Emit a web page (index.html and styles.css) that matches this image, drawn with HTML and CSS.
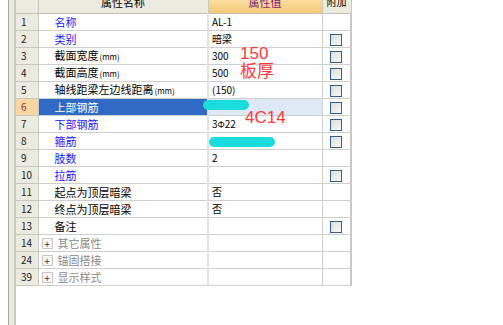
FILE: index.html
```html
<!DOCTYPE html>
<html lang="zh-CN">
<head>
    <meta charset="UTF-8">
    <title>属性编辑</title>
    <link rel="stylesheet" href="styles.css">
</head>
<body>
    <div class="page">
        <div class="gutter"></div>
        <div class="strip"></div>
        <div class="grid-wrap">
            <table class="props">
                <colgroup>
                    <col class="c-num">
                    <col class="c-name">
                    <col class="c-val">
                    <col class="c-add">
                </colgroup>
                <thead>
                    <tr>
                        <th class="h-num"></th>
                        <th class="h-name">属性名称</th>
                        <th class="h-val">属性值</th>
                        <th class="h-add">附加</th>
                    </tr>
                </thead>
                <tbody>
                    <tr><td class="num">1</td><td class="name blue">名称</td><td class="val">AL-1</td><td class="add"></td></tr>
                    <tr><td class="num">2</td><td class="name blue">类别</td><td class="val">暗梁</td><td class="add"><span class="chk"></span></td></tr>
                    <tr><td class="num">3</td><td class="name">截面宽度<small>(mm)</small></td><td class="val">300<span class="note n150">150</span></td><td class="add"><span class="chk"></span></td></tr>
                    <tr><td class="num">4</td><td class="name">截面高度<small>(mm)</small></td><td class="val">500<span class="note nthick">板厚</span></td><td class="add"><span class="chk"></span></td></tr>
                    <tr><td class="num">5</td><td class="name">轴线距梁左边线距离<small>(mm)</small></td><td class="val">(150)</td><td class="add"><span class="chk"></span></td></tr>
                    <tr class="sel"><td class="num">6</td><td class="name">上部钢筋</td><td class="val"><span class="blot b6"></span></td><td class="add"><span class="chk"></span></td></tr>
                    <tr><td class="num">7</td><td class="name blue">下部钢筋</td><td class="val">3<span class="bar">Φ</span>22<span class="note n4c">4C14</span></td><td class="add"><span class="chk"></span></td></tr>
                    <tr><td class="num">8</td><td class="name blue">箍筋</td><td class="val"><span class="blot b8"></span></td><td class="add"><span class="chk"></span></td></tr>
                    <tr><td class="num">9</td><td class="name blue">肢数</td><td class="val">2</td><td class="add"></td></tr>
                    <tr><td class="num">10</td><td class="name blue">拉筋</td><td class="val"></td><td class="add"><span class="chk"></span></td></tr>
                    <tr><td class="num">11</td><td class="name">起点为顶层暗梁</td><td class="val">否</td><td class="add"></td></tr>
                    <tr><td class="num">12</td><td class="name">终点为顶层暗梁</td><td class="val">否</td><td class="add"></td></tr>
                    <tr><td class="num">13</td><td class="name">备注</td><td class="val"></td><td class="add"><span class="chk"></span></td></tr>
                    <tr class="group"><td class="num">14</td><td class="name"><span class="plus">+</span>其它属性</td><td class="val"></td><td class="add"></td></tr>
                    <tr class="group"><td class="num">24</td><td class="name"><span class="plus">+</span>锚固搭接</td><td class="val"></td><td class="add"></td></tr>
                    <tr class="group"><td class="num">39</td><td class="name"><span class="plus">+</span>显示样式</td><td class="val"></td><td class="add"></td></tr>
                </tbody>
            </table>
        </div>
    </div>
</body>
</html>
```

FILE: styles.css
```css
body {
    margin: 0;
    background-color: #fff;
    font-family: "Noto Sans CJK SC", "Liberation Sans", sans-serif;
    font-size: 11px;
    color: #000;
}

.page {
    display: flex;
    height: 325px;
    overflow: hidden;
}

.gutter {
    width: 8px;
}

.strip {
    width: 5px;
    border-left: 1px solid #a8a8a0;
    border-right: 2px solid #c8c8c0;
    background-color: #ecebe0;
}

.grid-wrap {
    overflow: hidden;
}

.props {
    border-collapse: collapse;
    table-layout: fixed;
    width: 335px;
    margin-top: -5px;
}

.c-num { width: 22px; }
.c-name { width: 170px; }
.c-val { width: 114px; }
.c-add { width: 29px; }

th {
    height: 18px;
    padding: 0;
    font-weight: normal;
    font-size: 11px;
    line-height: 14px;
    vertical-align: top;
    background-color: #ecebe0;
    border-right: 1px solid #c8c8c0;
    border-bottom: 1px solid #c0c0b8;
}

.h-val {
    background: linear-gradient(#fbe3ae, #f6c978);
    color: #7a1a7a;
}

.h-add {
    font-size: 10px;
}

td {
    height: 16px;
    padding: 0;
    line-height: 14px;
    border-bottom: 1px solid #cfcfcf;
    white-space: nowrap;
    overflow: visible;
    position: relative;
}

.num {
    background-color: #ecebe0;
    border-right: 1px solid #c8c8c0;
    border-bottom: 1px solid #c8c8c0;
    font-size: 10px;
    padding-left: 5px;
    color: #222;
}

.name {
    padding-left: 16px;
}

.name small {
    font-size: 8px;
    margin-left: 1px;
}

.blue {
    color: #1a1aff;
}

.val {
    border-left: 2px solid #e2e2e2;
    padding-left: 3px;
    font-size: 10px;
}

.add {
    border-left: 1px solid #cfcfcf;
    border-right: 2px solid #c8c8c8;
    text-align: center;
}

.chk {
    display: block;
    width: 10px;
    height: 10px;
    margin: 1px auto 0;
    border: 1px solid #2f5f8f;
    background: linear-gradient(135deg, #dcdcd8, #fafafa);
}

.sel .num {
    background-color: #f9d7a2;
    color: #9a2a2a;
}

.sel .name {
    background-color: #316ac5;
    color: #fff;
}

.sel .val {
    background-color: #dfe8f5;
}

.group .name {
    padding-left: 3px;
    color: #8a8a8a;
}

.plus {
    display: inline-block;
    width: 9px;
    height: 9px;
    line-height: 9px;
    margin: 2px 5px 0 0;
    vertical-align: top;
    border: 1px solid #c8c8c8;
    background-color: #f6f6f6;
    color: #333;
    font-size: 10px;
    text-align: center;
}

.bar {
    font-size: 9px;
}

.note {
    position: absolute;
    color: #ff3a3a;
    font-family: "Liberation Sans", "Noto Sans CJK SC", sans-serif;
    font-size: 17px;
    line-height: 18px;
}

.n150 {
    left: 31px;
    top: -3px;
}

.nthick {
    left: 31px;
    top: -2px;
}

.n4c {
    left: 36px;
    top: -7px;
}

.blot {
    position: absolute;
    height: 10px;
    border-radius: 6px;
    background-color: #1adcdc;
}

.b6 {
    left: -6px;
    top: 1px;
    width: 46px;
}

.b8 {
    left: 0;
    top: 4px;
    width: 66px;
}
```
